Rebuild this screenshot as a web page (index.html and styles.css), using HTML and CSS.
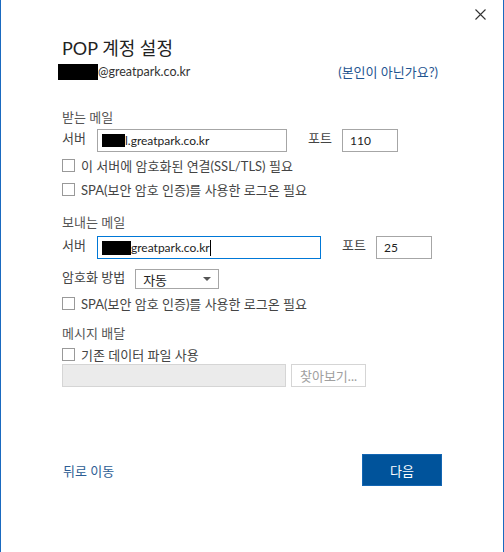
FILE: index.html
```html
<!doctype html>
<html>
<head>
	<meta charset="utf-8">
	<title>POP 계정 설정</title>
	<link rel="stylesheet" href="styles.css">
</head>
<body>
	<div class="window">
		<div class="titlebar">
			<button class="close" title="닫기">
				<svg width="11" height="11" viewBox="0 0 11 11"><path d="M0.5 0.5 L10.5 10.5 M10.5 0.5 L0.5 10.5" stroke="#333" stroke-width="1.1" fill="none"/></svg>
			</button>
		</div>

		<div class="content">
			<h1 class="title">POP 계정 설정</h1>
			<div class="account">
				<span class="account-name"><span class="redact redact-name"></span>@greatpark.co.kr</span>
				<a href="#" class="link not-me">(본인이 아닌가요?)</a>
			</div>

			<div class="section-label incoming">받는 메일</div>
			<div class="server-row">
				<span class="field-label">서버</span>
				<div class="input server-in"><span class="redact redact-in"></span>l.greatpark.co.kr</div>
				<span class="field-label port-label">포트</span>
				<div class="input port">110</div>
			</div>
			<label class="check first"><span class="box"></span>이 서버에 암호화된 연결(SSL/TLS) 필요</label>
			<label class="check"><span class="box"></span>SPA(보안 암호 인증)를 사용한 로그온 필요</label>

			<div class="section-label outgoing">보내는 메일</div>
			<div class="server-row">
				<span class="field-label">서버</span>
				<div class="input server-out focus"><span class="redact redact-out"></span>greatpark.co.kr<span class="caret"></span></div>
				<span class="field-label port-label">포트</span>
				<div class="input port">25</div>
			</div>
			<div class="crypt-row">
				<span class="field-label crypt-label">암호화 방법</span>
				<div class="select">자동<span class="arrow"></span></div>
			</div>
			<label class="check spa-out"><span class="box"></span>SPA(보안 암호 인증)를 사용한 로그온 필요</label>

			<div class="section-label delivery">메시지 배달</div>
			<label class="check existing"><span class="box"></span>기존 데이터 파일 사용</label>
			<div class="file-row">
				<div class="input disabled"></div>
				<button class="browse" disabled>찾아보기...</button>
			</div>

			<div class="footer">
				<a href="#" class="link back">뒤로 이동</a>
				<button class="next">다음</button>
			</div>
		</div>
	</div>
</body>
</html>
```

FILE: styles.css
```css
html, body { margin: 0; padding: 0; background: #fff; }
body {
	font-family: Lato, "Noto Sans CJK KR", sans-serif;
	font-size: 13px;
	color: #444;
}
.window {
	width: 502px;
	height: 552px;
	border-left: 1px solid #1a6ac0;
	border-right: 1px solid #1a6ac0;
	display: flex;
	flex-direction: column;
}
.titlebar {
	height: 36px;
	display: flex;
	justify-content: flex-end;
	align-items: flex-start;
}
.close {
	margin: 9px 17px 0 0;
	padding: 0;
	border: none;
	background: none;
	width: 11px;
	height: 11px;
}
.close svg { display: block; }

.content {
	flex: 1;
	display: flex;
	flex-direction: column;
	padding: 0 61px 66px 61px;
}
.title {
	margin: 0;
	font-size: 18px;
	font-weight: normal;
	line-height: 24px;
	color: #222;
}
.account {
	margin-top: 3px;
	height: 18px;
	line-height: 18px;
	display: flex;
	justify-content: space-between;
	align-items: center;
	color: #333;
}
.account-name { display: flex; align-items: center; margin-left: -4px; font-size: 12.5px; }
.redact { display: inline-block; background: #000; }
.redact-name { width: 40px; height: 16px; }
.link { color: #1f5591; text-decoration: none; }
.not-me { margin-right: 4px; }

.section-label { height: 18px; line-height: 18px; color: #555; }
.incoming { margin-top: 27px; }
.outgoing { margin-top: 12px; }
.delivery { margin-top: 9px; }

.server-row {
	margin-top: 3px;
	display: flex;
	align-items: flex-start;
}
.outgoing + .server-row { margin-top: 5px; }
.field-label { width: 35px; line-height: 18px; color: #444; }
.port-label { width: 34px; margin-left: 21px; }
.input {
	box-sizing: border-box;
	height: 23px;
	border: 1px solid #a6a6a6;
	background: #fff;
	padding: 0 4px;
	display: flex;
	align-items: center;
	color: #222;
	font-size: 12px;
}
.server-in { width: 190px; }
.server-out { width: 224px; }
.port { width: 56px; padding-left: 7px; }
.focus { border-color: #0078d7; }
.redact-in { width: 23px; height: 13px; }
.redact-out { width: 29px; height: 14px; }
.caret { display: inline-block; width: 1px; height: 16px; background: #000; }

.check {
	height: 24px;
	display: flex;
	align-items: center;
	color: #444;
}
.check.first { margin-top: 1px; }
.box {
	box-sizing: border-box;
	width: 13px;
	height: 13px;
	border: 1px solid #999;
	background: #fff;
	margin-right: 6px;
}
.spa-out { margin-top: 2px; }
.existing { height: 20px; margin-top: 2px; }

.crypt-row {
	margin-top: 10px;
	display: flex;
	align-items: flex-start;
}
.crypt-label { width: auto; margin-right: 10px; line-height: 16px; }
.select {
	box-sizing: border-box;
	width: 84px;
	height: 20px;
	border: 1px solid #a6a6a6;
	padding: 0 7px;
	display: flex;
	align-items: center;
	justify-content: space-between;
	color: #222;
}
.arrow {
	width: 0;
	height: 0;
	border-left: 4px solid transparent;
	border-right: 4px solid transparent;
	border-top: 4px solid #555;
}

.file-row { display: flex; gap: 5px; }
.disabled { width: 224px; background: #ebebeb; border-color: #d5d5d5; }
.browse {
	box-sizing: border-box;
	width: 75px;
	height: 23px;
	border: 1px solid #d5d5d5;
	background: #fff;
	color: #a0a0a0;
	font-family: inherit;
	font-size: 13px;
	padding: 0;
}

.footer {
	margin-top: auto;
	display: flex;
	justify-content: space-between;
	align-items: center;
}
.back { margin-left: 1px; color: #2c5d94; }
.next {
	box-sizing: border-box;
	width: 80px;
	height: 32px;
	background: #00539b;
	border: 1px solid #1366b3;
	color: #fff;
	font-family: inherit;
	font-size: 13px;
	padding: 0;
}
```
